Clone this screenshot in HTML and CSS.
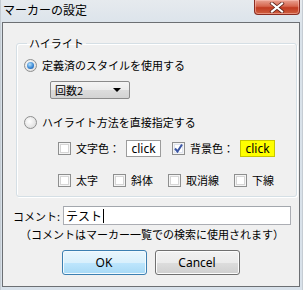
FILE: index.html
```html
<!DOCTYPE html>
<html>
<head>
    <meta charset="utf-8" />
    <link rel="stylesheet" href="styles.css">
</head>
<body>
    <section class="window">
        <div class="titlebar">
            <span class="title">マーカーの設定</span>
            <span class="close">
                <svg width="16" height="11" viewBox="0 0 16 11">
                    <path d="M3 1.5 L13 9.5 M13 1.5 L3 9.5" stroke="#5a2018" stroke-width="3.6" stroke-linecap="square" />
                    <path d="M3 1.5 L13 9.5 M13 1.5 L3 9.5" stroke="#fff" stroke-width="2.2" stroke-linecap="square" />
                </svg>
            </span>
        </div>

        <div class="client">
            <fieldset class="group">
                <legend>ハイライト</legend>

                <label class="row">
                    <span class="radio checked"></span>
                    定義済のスタイルを使用する
                </label>

                <div class="combo">
                    <span>回数2</span>
                    <svg width="8" height="4" viewBox="0 0 8 4"><path d="M0 0 H8 L4 4 Z" fill="#000" /></svg>
                </div>

                <label class="row second">
                    <span class="radio"></span>
                    ハイライト方法を直接指定する
                </label>

                <div class="checks first">
                    <label class="check-item color"><span class="check"></span>文字色：</label>
                    <span class="swatch">click</span>
                    <label class="check-item color"><span class="check checked">
                        <svg width="11" height="11" viewBox="0 0 11 11"><path d="M2 5.5 L4.5 8.5 L9 1.5" stroke="#3b56a4" stroke-width="2" fill="none" /></svg>
                    </span>背景色：</label>
                    <span class="swatch yellow">click</span>
                </div>

                <div class="checks">
                    <label class="check-item"><span class="check"></span>太字</label>
                    <label class="check-item"><span class="check"></span>斜体</label>
                    <label class="check-item"><span class="check"></span>取消線</label>
                    <label class="check-item"><span class="check"></span>下線</label>
                </div>
            </fieldset>

            <div class="comment">
                <label for="c">コメント:</label>
                <div class="input" id="c">テスト<span class="caret"></span></div>
            </div>
            <p class="hint">（コメントはマーカー一覧での検索に使用されます）</p>

            <div class="buttons">
                <button class="btn default">OK</button>
                <button class="btn">Cancel</button>
            </div>
        </div>
    </section>
</body>
</html>
```

FILE: styles.css
```css
* {
    padding: 0;
    margin: 0;
    box-sizing: border-box;
}

body {
    background-color: #dfe6ec;
    font-family: "Noto Sans CJK JP", "Noto Sans", sans-serif;
    font-size: 11px;
    color: #000;
}

.window {
    width: 303px;
    height: 290px;
    display: flex;
    flex-direction: column;
    background: linear-gradient(#e6eaee, #d9e2ea 30px, #d8e1ea);
    border-left: 1px solid #c5ccd3;
    border-right: 1px solid #c5ccd3;
}

.titlebar {
    height: 22px;
    display: flex;
    align-items: flex-start;
    justify-content: space-between;
    padding-left: 2px;
    padding-right: 2px;
}

.title {
    font-size: 12px;
    line-height: 18px;
    padding-top: 1px;
}

.close {
    width: 46px;
    height: 15px;
    display: flex;
    align-items: center;
    justify-content: center;
    border: 1px solid #8a2c21;
    border-top: none;
    border-radius: 0 0 4px 4px;
    background: linear-gradient(#e9a393, #d6664e 45%, #c13b21 55%, #cf5f3f);
    box-shadow: inset 0 0 0 1px rgba(255, 200, 190, 0.5);
}

.client {
    flex: 1;
    margin: 0 2px 3px 1px;
    border: 1px solid #6c6f73;
    background-color: #f0f0f0;
    display: flex;
    flex-direction: column;
}

.group {
    margin: 13px 11px 0 13px;
    border: 1px solid #d5dfe5;
    border-radius: 3px;
    box-shadow: inset 1px 1px 0 #fff, 1px 1px 0 #fff;
    padding: 7px 7px 8px 7px;
    height: 161px;
}

.group legend {
    margin-left: 3px;
    padding: 0 2px;
    line-height: 14px;
}

.row {
    display: flex;
    align-items: center;
    gap: 5px;
    height: 16px;
    white-space: nowrap;
}

.row.second {
    margin-top: 15px;
}

.radio {
    flex-shrink: 0;
    width: 13px;
    height: 13px;
    border-radius: 50%;
    border: 1px solid #8e8f8f;
    background: radial-gradient(circle at 40% 40%, #fff, #e6e6e6 60%, #d4d4d4);
    display: flex;
    align-items: center;
    justify-content: center;
}

.radio.checked::after {
    content: "";
    width: 7px;
    height: 7px;
    border-radius: 50%;
    background: radial-gradient(circle at 40% 35%, #b8e2fb, #3d8ad6 55%, #0d4a97);
}

.combo {
    margin: 8px 0 0 26px;
    width: 80px;
    height: 18px;
    border: 1px solid #8a8a8a;
    border-radius: 2px;
    background: linear-gradient(#f4f4f4, #ebebeb 50%, #dcdcdc 51%, #d3d3d3);
    display: flex;
    align-items: center;
    justify-content: space-between;
    padding: 0 8px 0 4px;
}

.checks {
    display: flex;
    align-items: center;
    margin-left: 34px;
    height: 18px;
    white-space: nowrap;
}

.checks.first {
    margin-top: 9px;
}

.checks + .checks {
    margin-top: 14px;
}

.check-item {
    flex-shrink: 0;
    display: flex;
    align-items: center;
    gap: 5px;
    margin-right: 15px;
}

.check-item.color {
    margin-right: 6px;
}

.check {
    flex-shrink: 0;
    width: 13px;
    height: 13px;
    border: 1px solid #8e8f8f;
    background: #fff;
    box-shadow: inset 0 0 0 1px #f4f4f4, inset 0 0 0 2px #d6d6d6;
    display: flex;
    align-items: center;
    justify-content: center;
}

.check.checked {
    box-shadow: inset 0 0 0 1px #f4f4f4, inset 0 0 0 2px #dfe4ef;
}

.swatch {
    flex-shrink: 0;
    width: 35px;
    height: 17px;
    border: 1px solid #9c9c9c;
    background: #fff;
    display: flex;
    align-items: center;
    justify-content: center;
    font-family: "Noto Sans", sans-serif;
    font-size: 12px;
    margin-right: 11px;
}

.swatch.yellow {
    background: #ffff00;
    border-color: #c8c800;
    margin-right: 0;
}

.comment {
    display: flex;
    align-items: center;
    gap: 3px;
    margin: 9px 8px 0 10px;
}

.input {
    flex: 1;
    height: 19px;
    border: 1px solid #abadb3;
    border-top-color: #a3a7ad;
    background: #fff;
    display: flex;
    align-items: center;
    padding-left: 2px;
    font-size: 12px;
}

.caret {
    width: 1px;
    height: 14px;
    background: #000;
    margin-left: 1px;
}

.hint {
    margin: 2px 0 0 17px;
    line-height: 14px;
}

.buttons {
    display: flex;
    justify-content: center;
    gap: 8px;
    margin-top: 9px;
    padding-right: 1px;
}

.btn {
    width: 85px;
    height: 25px;
    border: 1px solid #707070;
    border-radius: 3px;
    background: linear-gradient(#f2f2f2, #ebebeb 50%, #dddddd 51%, #cfcfcf);
    box-shadow: inset 0 0 0 1px #fcfcfc;
    font-family: "Noto Sans", sans-serif;
    font-size: 12px;
    color: #000;
}

.btn.default {
    border-color: #3c7fb1;
    background: linear-gradient(#eaf6fd, #d9f0fc 50%, #bee6fd 51%, #a7d9f5);
    box-shadow: inset 0 0 0 1px #f2fafe;
}
```
